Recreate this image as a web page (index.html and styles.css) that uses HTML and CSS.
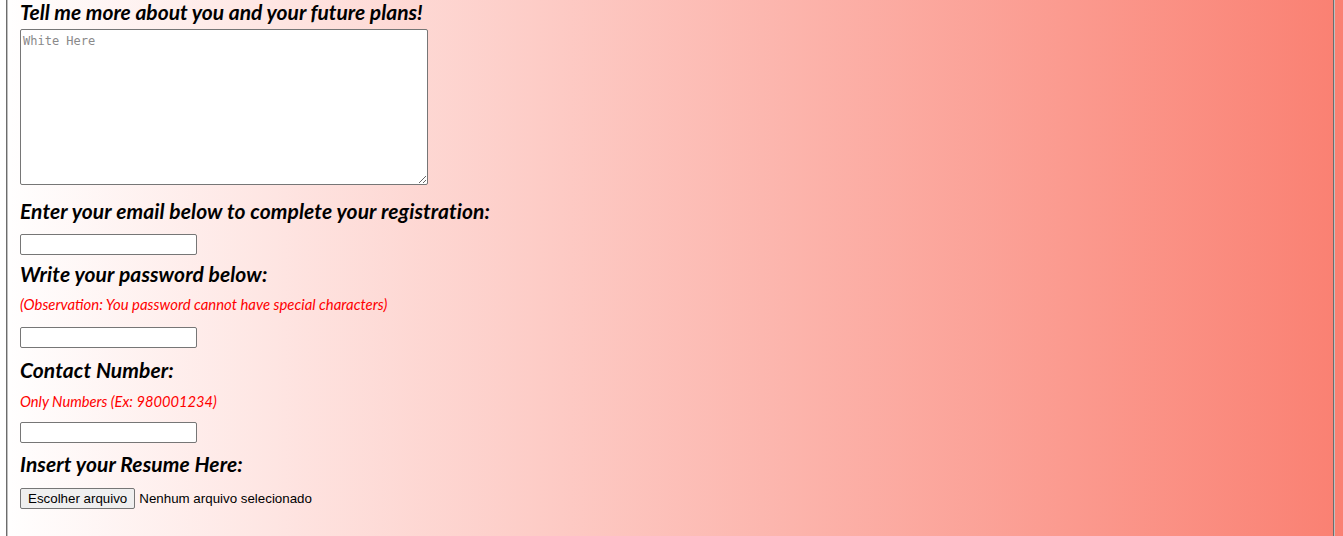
FILE: index.html
```html
<!DOCTYPE html>
<html lang="en">
<head>
<meta charset="utf-8">
<title>Registration</title>
<link rel="stylesheet" href="styles.css">
</head>
<body>
<form class="form">
  <fieldset class="box">
    <label class="q q-first" for="plans">Tell me more about you and your future plans!</label>
    <textarea id="plans" class="area" placeholder="White Here"></textarea>

    <label class="q q-email" for="email">Enter your email below to complete your registration:</label>
    <input id="email" class="field" type="email">

    <label class="q q-pass" for="pass">Write your password below:</label>
    <p class="note note-pass">(Observation: You password cannot have special characters)</p>
    <input id="pass" class="field field-pass" type="password">

    <label class="q q-phone" for="phone">Contact Number:</label>
    <p class="note note-phone">Only Numbers (Ex: 980001234)</p>
    <input id="phone" class="field field-phone" type="tel">

    <label class="q q-resume" for="resume">Insert your Resume Here:</label>
    <div class="file">
      <label class="file-btn" for="resume">Escolher arquivo</label>
      <input id="resume" class="file-input" type="file">
      <span class="file-name">Nenhum arquivo selecionado</span>
    </div>
  </fieldset>
</form>
</body>
</html>
```

FILE: styles.css
```css
html {
  background: linear-gradient(to right, #ffffff 0%, #fa8072 100%);
  min-height: 100%;
}
body {
  margin: 0;
  padding: 0 8px 0 6px;
  min-height: 100vh;
}
.form {
  margin: 0;
}
.box {
  margin: 0;
  border: 2px groove #c0c0c0;
  border-top: none;
  padding: 0 12px 60px 12px;
  display: flex;
  flex-direction: column;
  align-items: flex-start;
  min-height: 560px;
}
.q {
  font-family: "Lato", "Open Sans", sans-serif;
  font-style: italic;
  font-weight: 700;
  font-size: 21px;
  line-height: 24px;
  color: #000;
  display: block;
  margin-top: 7px;
  letter-spacing: 0.1px;
}
.q-first {
  margin-top: 0;
  letter-spacing: 0;
}
.q-email {
  margin-top: 14px;
}
.q-phone {
  margin-top: 10px;
}
.q-resume {
  margin-top: 9px;
}
.note {
  font-family: "Lato", "Open Sans", sans-serif;
  font-style: italic;
  font-size: 14.9px;
  line-height: 18px;
  color: #ff0000;
  margin: 9px 0 0 0;
}
.note-phone {
  margin-top: 10px;
  font-size: 14.7px;
}
.area {
  box-sizing: border-box;
  width: 408px;
  height: 156px;
  margin: 5px 0 0 0;
  border: 1px solid #767676;
  border-radius: 2px;
  padding: 4px 2px 2px 2px;
  font-family: "DejaVu Sans Mono", "Liberation Mono", monospace;
  font-size: 12px;
  line-height: 15px;
  background: #fff;
  resize: both;
}
.area::placeholder {
  color: #8a8a8a;
}
.field {
  box-sizing: border-box;
  width: 177px;
  height: 21px;
  margin: 11px 0 0 0;
  border: 1px solid #767676;
  border-radius: 2px;
  padding: 1px 2px;
  background: #fff;
}
.field-pass {
  margin-top: 14px;
}
.field-phone {
  margin-top: 12px;
}
.file {
  display: flex;
  align-items: center;
  gap: 4px;
  margin-top: 12px;
  font-family: "Liberation Sans", Arial, sans-serif;
  font-size: 13.33px;
  color: #000;
}
.file-btn {
  box-sizing: border-box;
  height: 21px;
  padding: 1px 7px;
  border: 1px solid #767676;
  border-radius: 2px;
  background: #efefef;
  display: flex;
  align-items: center;
  line-height: 16px;
}
.file-input {
  display: none;
}
.file-name {
  line-height: 16px;
}
```
